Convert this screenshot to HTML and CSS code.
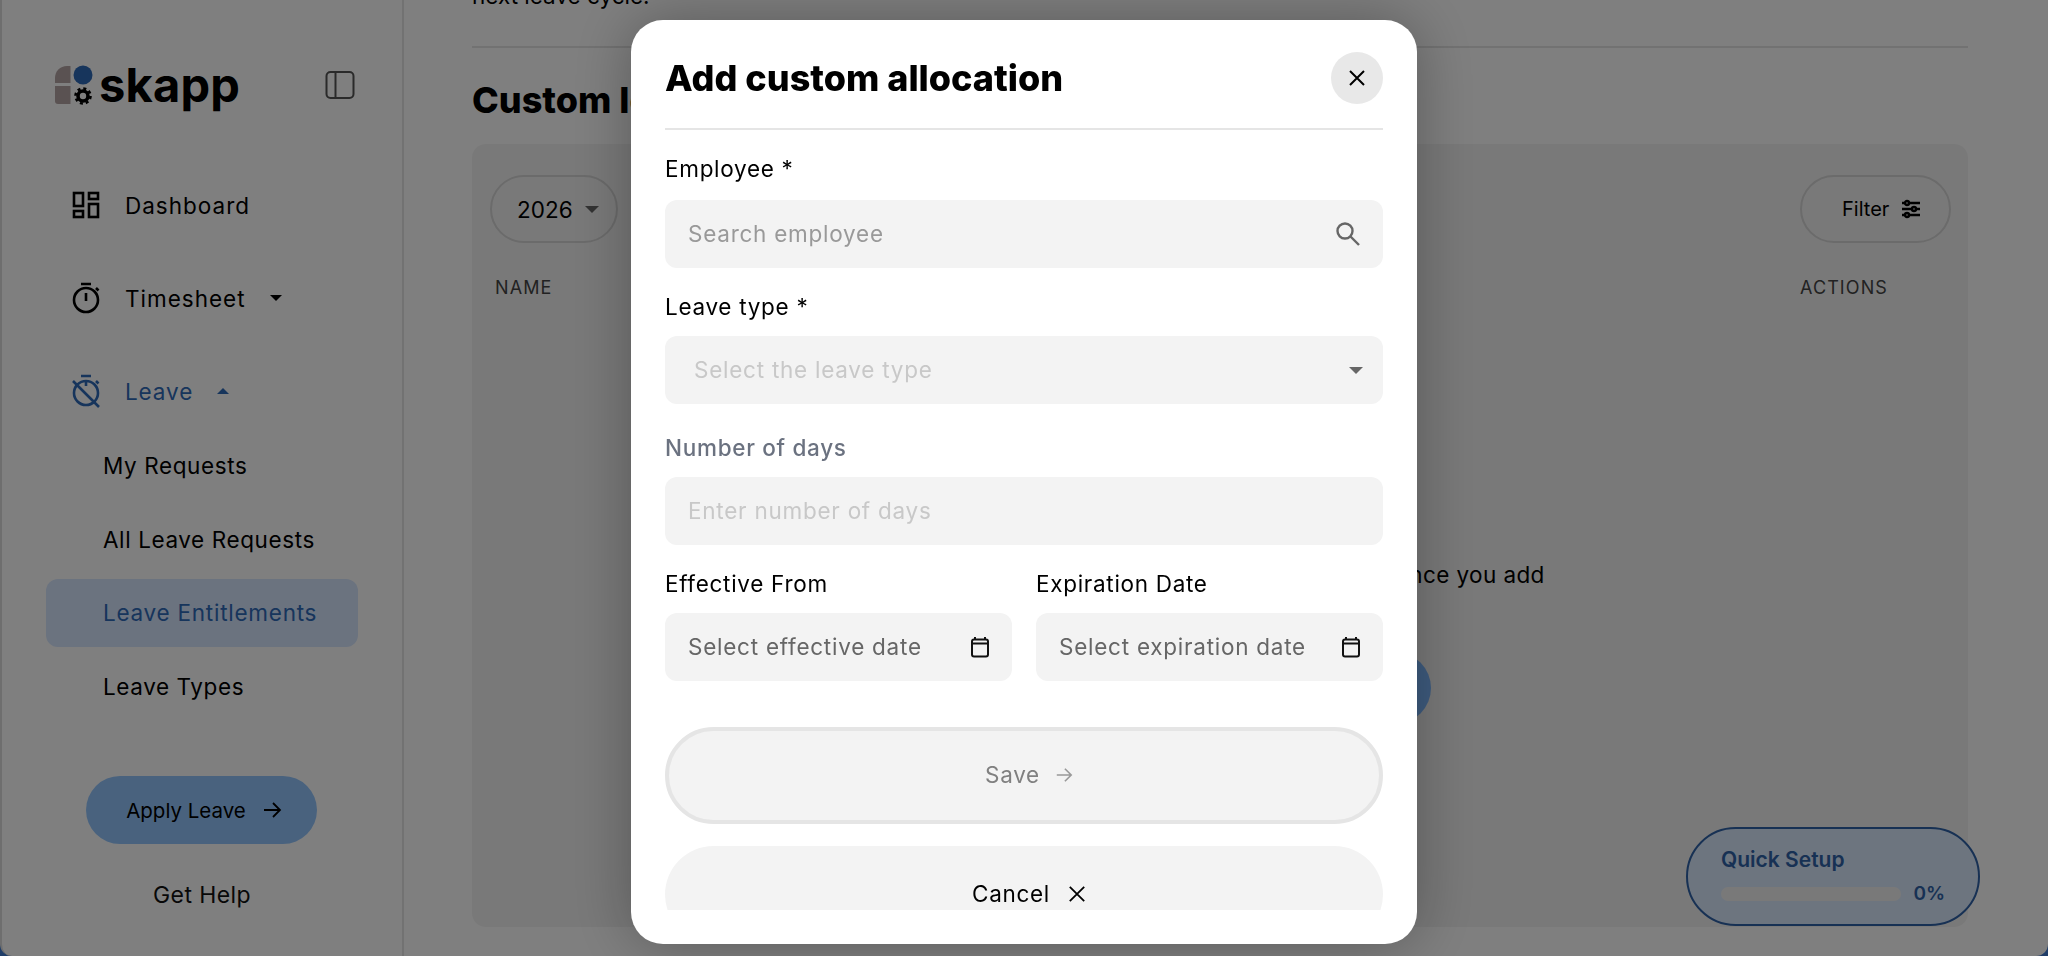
FILE: index.html
```html
<!DOCTYPE html>
<html lang="en">
<head>
    <meta charset="UTF-8">
    <meta name="viewport" content="width=device-width, initial-scale=1.0">
    <title>skapp - Leave Entitlements</title>
    <link rel="stylesheet" href="styles.css">
</head>
<body>
    <div class="app">
        <aside class="sidebar">
            <div class="brand">
                <div class="logo">
                    <svg class="logo-mark" viewBox="0 0 40 40" width="40" height="40">
                        <path d="M1 18V13C1 6 6 1 13 1H16.500V18Z" fill="#b4a4a4"/>
                        <path d="M1 21H16.500V39H4C2 39 1 38 1 36Z" fill="#b4a4a4"/>
                        <circle cx="29" cy="10" r="9.500" fill="#2f6ab8"/>
                        <circle cx="29" cy="31" r="5" fill="none" stroke="#000" stroke-width="3.600"/>
                        <circle cx="29" cy="31" r="7.500" fill="none" stroke="#000" stroke-width="2.600" stroke-dasharray="3 2.900"/>
                    </svg>
                    <span class="logo-text">skapp</span>
                </div>
                <svg class="collapse-icon" viewBox="0 0 30 30" width="30" height="30" fill="none" stroke="#555" stroke-width="2">
                    <rect x="1.500" y="2" width="27" height="26" rx="4"/>
                    <path d="M10.500 2V28"/>
                </svg>
            </div>

            <nav class="nav">
                <div class="nav-item">
                    <svg viewBox="0 0 28 28" width="28" height="28" fill="none" stroke="#000" stroke-width="2.600">
                        <rect x="2" y="2" width="9" height="13"/>
                        <rect x="17" y="2" width="9" height="6"/>
                        <rect x="2" y="20" width="9" height="6"/>
                        <rect x="17" y="13" width="9" height="13"/>
                    </svg>
                    <span>Dashboard</span>
                </div>
                <div class="nav-item">
                    <svg viewBox="0 0 28 32" width="28" height="32" fill="none" stroke="#000" stroke-width="2.600">
                        <circle cx="14" cy="18" r="12"/>
                        <path d="M9 2H19M14 11V19M24 6L26.500 8.500"/>
                    </svg>
                    <span>Timesheet</span>
                    <i class="caret caret-down"></i>
                </div>
                <div class="nav-item nav-open">
                    <svg viewBox="0 0 30 34" width="30" height="34" fill="none" stroke="#2f6ab8" stroke-width="2.600">
                        <circle cx="15" cy="19" r="12"/>
                        <path d="M10 2H20M15 8V12M25 7L27.500 9.500M2 7L28 33"/>
                    </svg>
                    <span>Leave</span>
                    <i class="caret caret-up"></i>
                </div>
                <div class="nav-sub">My Requests</div>
                <div class="nav-sub">All Leave Requests</div>
                <div class="nav-sub nav-active">Leave Entitlements</div>
                <div class="nav-sub">Leave Types</div>
            </nav>

            <button class="apply-button">
                Apply Leave
                <svg viewBox="0 0 20 20" width="20" height="20" fill="none" stroke="#000" stroke-width="1.800">
                    <path d="M2 10H18M11 3L18 10L11 17"/>
                </svg>
            </button>
            <div class="help-link">Get Help</div>
        </aside>

        <main class="main">
            <p class="cycle-note">next leave cycle.</p>
            <div class="separator"></div>
            <h2 class="page-title">Custom leave allocations</h2>

            <section class="card">
                <div class="toolbar">
                    <div class="pill year-pill">2026 <i class="caret caret-down caret-grey"></i></div>
                    <div class="pill filter-pill">
                        Filter
                        <svg viewBox="0 0 20 20" width="20" height="20" fill="none" stroke="#000" stroke-width="2.400">
                            <path d="M1 4H19M1 10H19M1 16H19"/>
                            <circle cx="6" cy="4" r="2" fill="#f3f3f3"/>
                            <circle cx="13" cy="10" r="2" fill="#f3f3f3"/>
                            <circle cx="6" cy="16" r="2" fill="#f3f3f3"/>
                        </svg>
                    </div>
                </div>
                <div class="table-head">
                    <span>NAME</span>
                    <span class="actions-head">ACTIONS</span>
                </div>
                <div class="empty">
                    <p>Your custom leave allocations will show here once you add</p>
                    <button class="add-button">Add custom allocation</button>
                </div>
            </section>
        </main>
    </div>

    <div class="quick-setup">
        <div class="quick-title">Quick Setup</div>
        <div class="quick-row">
            <div class="quick-bar"></div>
            <span>0%</span>
        </div>
    </div>

    <div class="overlay">
        <div class="modal">
            <div class="modal-header">
                <h1>Add custom allocation</h1>
                <button class="close-button">
                    <svg viewBox="0 0 20 20" width="20" height="20" fill="none" stroke="#000" stroke-width="2">
                        <path d="M3 3L17 17M17 3L3 17"/>
                    </svg>
                </button>
            </div>

            <div class="modal-body">
                <label class="field-label first-label">Employee *</label>
                <div class="field">
                    <span class="hint">Search employee</span>
                    <svg viewBox="0 0 26 26" width="26" height="26" fill="none" stroke="#666" stroke-width="2.400">
                        <circle cx="10" cy="10" r="7.500"/>
                        <path d="M15.500 15.500L24 24"/>
                    </svg>
                </div>

                <label class="field-label">Leave type *</label>
                <div class="field select-field">
                    <span class="hint-light">Select the leave type</span>
                    <i class="caret caret-down caret-grey"></i>
                </div>

                <label class="field-label muted-label">Number of days</label>
                <div class="field">
                    <span class="hint-light">Enter number of days</span>
                </div>

                <div class="date-row">
                    <div>
                        <label class="field-label">Effective From</label>
                        <div class="field">
                            <span class="hint-dark">Select effective date</span>
                            <svg class="calendar" viewBox="0 0 20 22" width="20" height="22" fill="none" stroke="#111" stroke-width="2">
                                <rect x="2" y="3.500" width="16" height="17" rx="2"/>
                                <path d="M2 7.500H18M5 1V4M15 1V4"/>
                            </svg>
                        </div>
                    </div>
                    <div>
                        <label class="field-label">Expiration Date</label>
                        <div class="field">
                            <span class="hint-dark">Select expiration date</span>
                            <svg class="calendar" viewBox="0 0 20 22" width="20" height="22" fill="none" stroke="#111" stroke-width="2">
                                <rect x="2" y="3.500" width="16" height="17" rx="2"/>
                                <path d="M2 7.500H18M5 1V4M15 1V4"/>
                            </svg>
                        </div>
                    </div>
                </div>

                <button class="wide-button save-button">
                    Save
                    <svg viewBox="0 0 20 20" width="18" height="18" fill="none" stroke="#999" stroke-width="1.800">
                        <path d="M2 10H18M11 3L18 10L11 17"/>
                    </svg>
                </button>
                <button class="wide-button cancel-button">
                    Cancel
                    <svg viewBox="0 0 20 20" width="18" height="18" fill="none" stroke="#000" stroke-width="2">
                        <path d="M2 2L18 18M18 2L2 18"/>
                    </svg>
                </button>
            </div>
        </div>
    </div>
</body>
</html>
```

FILE: styles.css
```css
* {
    box-sizing: border-box;
}

html,
body {
    height: 100%;
}

body {
    margin: 0;
    overflow: hidden;
    background-color: #3e7ad0;
    font-family: Inter, "Open Sans", sans-serif;
    color: #000;
}

button {
    font-family: inherit;
    border: none;
    cursor: pointer;
}

.app {
    display: flex;
    height: 956px;
    background-color: #fff;
    border-left: 2px solid #ddd;
    border-radius: 0 0 12px 12px;
    overflow: hidden;
}

/* sidebar */
.sidebar {
    width: 402px;
    flex-shrink: 0;
    display: flex;
    flex-direction: column;
    align-items: center;
    border-right: 2px solid #e4e4e4;
}

.brand {
    width: 100%;
    height: 172px;
    display: flex;
    align-items: flex-start;
    justify-content: space-between;
    padding: 64px 47px 0 52px;
}

.logo {
    display: flex;
    align-items: center;
    gap: 5px;
}

.logo-text {
    font-size: 47px;
    line-height: 42px;
    font-weight: 700;
    letter-spacing: 0.2px;
}

.collapse-icon {
    margin-top: 6px;
}

.nav {
    width: 100%;
    padding: 0 44px;
}

.nav-item {
    height: 68px;
    margin-bottom: 25px;
    padding: 0 0 2px 25px;
    display: flex;
    align-items: center;
    gap: 24px;
    font-size: 22.5px;
    letter-spacing: 1px;
}

.nav-item svg {
    width: 30px;
    flex-shrink: 0;
}

.nav-open {
    margin-bottom: 6px;
    color: #2f6ab8;
    letter-spacing: 0.9px;
}

.nav-sub {
    height: 68px;
    margin-bottom: 5.5px;
    padding: 0 0 1px 57px;
    display: flex;
    align-items: center;
    border-radius: 12px;
    font-size: 22.5px;
    letter-spacing: 0.6px;
}

.nav-active {
    background-color: #d6e6ff;
    color: #2f6ab8;
    letter-spacing: 0.75px;
}

.caret {
    display: inline-block;
    width: 0;
    height: 0;
    border-left: 6px solid transparent;
    border-right: 6px solid transparent;
}

.caret-down {
    border-top: 6px solid #000;
}

.caret-up {
    border-bottom: 6px solid #2f6ab8;
}

.caret-grey {
    border-top-color: #666;
}

.apply-button {
    width: 231px;
    height: 68px;
    margin: 50px 2px 0 0;
    padding-left: 12px;
    display: flex;
    align-items: center;
    justify-content: center;
    gap: 16px;
    border-radius: 34px;
    background-color: #93c5fd;
    font-size: 20.5px;
    flex-shrink: 0;
}

.help-link {
    margin-top: 31px;
    line-height: 40px;
    font-size: 23px;
    letter-spacing: 0.4px;
    color: #111;
}

/* main */
.main {
    flex: 1;
    padding: 0 80px 0 68px;
    overflow: hidden;
}

.cycle-note {
    margin: -18px 0 0;
    height: 64px;
    line-height: 28px;
    font-size: 22.5px;
}

.separator {
    border-top: 2px solid #e4e4e4;
}

.page-title {
    margin: 0;
    height: 96px;
    padding-top: 30px;
    line-height: 44px;
    font-size: 36px;
    font-weight: 800;
}

.card {
    height: 783px;
    padding: 31px 17px 0 18px;
    background-color: #f3f3f3;
    border-radius: 14px;
}

.toolbar {
    display: flex;
    justify-content: space-between;
}

.pill {
    height: 68px;
    display: flex;
    align-items: center;
    border: 2px solid #d6d6d6;
    border-radius: 34px;
}

.year-pill {
    width: 128px;
    gap: 12px;
    padding-left: 25px;
    font-size: 22.5px;
}

.year-pill .caret {
    border-left-width: 7px;
    border-right-width: 7px;
    border-top-width: 7px;
}

.filter-pill {
    width: 151px;
    gap: 12px;
    padding-left: 40px;
    font-size: 20px;
}

.table-head {
    display: flex;
    justify-content: space-between;
    margin-top: 31px;
    padding-left: 5px;
    line-height: 28px;
    font-size: 18px;
    letter-spacing: 1.1px;
    color: #444;
}

.actions-head {
    width: 151px;
}

.empty {
    display: flex;
    flex-direction: column;
    align-items: center;
    margin-top: 259px;
}

.empty p {
    margin: 0;
    line-height: 28px;
    font-size: 22.5px;
    letter-spacing: 0.4px;
    white-space: nowrap;
}

.add-button {
    width: 420px;
    height: 72px;
    margin-top: 63px;
    border-radius: 36px;
    background-color: #7db8ff;
    color: #000;
    font-size: 20px;
}

.quick-setup {
    position: fixed;
    right: 68px;
    bottom: 30px;
    width: 294px;
    height: 99px;
    padding: 17px 33px 0 33px;
    background-color: #dbeafe;
    border: 2px solid #2f62a8;
    border-radius: 50px;
    color: #2f62a8;
    font-weight: 600;
}

.quick-title {
    line-height: 28px;
    font-size: 21px;
}

.quick-row {
    display: flex;
    align-items: center;
    justify-content: space-between;
    margin-top: 8px;
    font-size: 19px;
}

.quick-bar {
    width: 180px;
    height: 14px;
    background-color: #f3f3f3;
    border-radius: 7px;
}

/* modal */
.overlay {
    position: fixed;
    top: 0;
    left: 0;
    width: 100%;
    height: 100%;
    display: flex;
    justify-content: center;
    align-items: flex-start;
    padding-top: 20px;
    background-color: rgba(0, 0, 0, 0.5);
}

.modal {
    width: 786px;
    height: 924px;
    padding: 0 34px;
    background-color: #fff;
    border-radius: 32px;
    box-shadow: 0 0 60px rgba(0, 0, 0, 0.3);
}

.modal-header {
    height: 110px;
    display: flex;
    align-items: center;
    justify-content: space-between;
    padding-top: 8px;
    border-bottom: 2px solid #e5e5e5;
}

.modal-header h1 {
    margin: 0;
    font-size: 36px;
    font-weight: 800;
}

.close-button {
    width: 52px;
    height: 52px;
    display: flex;
    align-items: center;
    justify-content: center;
    border-radius: 50%;
    background-color: #e8e8e8;
    padding: 0;
}

.modal-body {
    height: 780px;
    overflow: hidden;
}

.field-label {
    display: block;
    margin: 25px 0 15px;
    line-height: 28px;
    font-size: 22.5px;
    letter-spacing: 0.7px;
}

.first-label {
    margin-bottom: 17px;
}

.muted-label {
    margin-top: 30px;
    font-weight: 500;
    color: #6b7280;
}

.field {
    height: 68px;
    display: flex;
    align-items: center;
    justify-content: space-between;
    padding: 0 22px 0 23px;
    background-color: #f3f3f3;
    border-radius: 12px;
    font-size: 22.5px;
    letter-spacing: 0.75px;
}

.field span {
    margin-bottom: 2px;
}

.select-field {
    padding: 0 20px 0 29px;
}

.select-field .caret {
    border-left-width: 7px;
    border-right-width: 7px;
    border-top-width: 7px;
}

.hint {
    color: #999;
}

.hint-light {
    color: #c8c8c8;
}

.hint-dark {
    color: #666;
}

.date-row {
    display: grid;
    grid-template-columns: 347px 347px;
    gap: 24px;
}

.wide-button {
    width: 100%;
    height: 97px;
    display: flex;
    align-items: center;
    justify-content: center;
    gap: 15px;
    border-radius: 49px;
    background-color: #f3f3f3;
    font-size: 22.5px;
    letter-spacing: 0.7px;
}

.save-button {
    margin-top: 46px;
    padding: 0 0 2px 10px;
    border: 4px solid #e5e5e5;
    color: #808080;
}

.cancel-button {
    margin-top: 22px;
    padding: 0 0 2px 10px;
    color: #000;
    gap: 18px;
}
```
